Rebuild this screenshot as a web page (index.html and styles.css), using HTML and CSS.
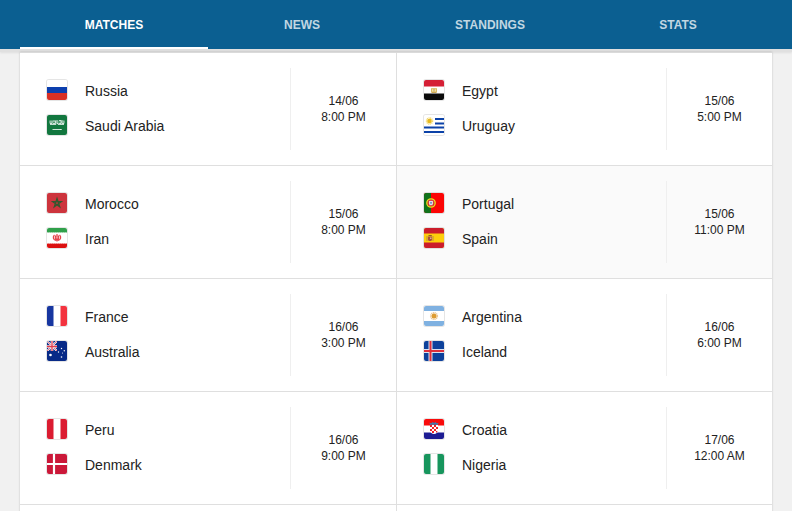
FILE: index.html
```html
<!DOCTYPE html>
<html lang="en">

<head>
  <meta charset="UTF-8">
  <meta name="viewport" content="width=device-width, initial-scale=1.0">
  <title>Matches</title>
  <link rel="stylesheet" href="styles.css">
</head>

<body>
  <header class="header">
    <nav class="tabs">
      <button type="button" class="tab active">MATCHES</button>
      <button type="button" class="tab">NEWS</button>
      <button type="button" class="tab">STANDINGS</button>
      <button type="button" class="tab">STATS</button>
    </nav>
  </header>

  <main class="matches">
    <div class="match">
      <div class="teams">
        <div class="team">
          <svg class="flag" viewBox="0 0 20 20">
            <rect width="20" height="20" fill="#fff"/>
            <rect y="7" width="20" height="7" fill="#0c3fae"/>
            <rect y="13" width="20" height="7" fill="#d93025"/>
          </svg>
          <span>Russia</span>
        </div>
        <div class="team">
          <svg class="flag" viewBox="0 0 20 20">
            <rect width="20" height="20" fill="#12773f"/>
            <rect x="3" y="5.500" width="14" height="4" fill="#fff" opacity=".25"/>
            <path d="M3 5.500v3h2v-3M6 8.500h2.500v-3M7 5v2M10 5v3.500h1.500M12 5.500h2v3h-2M15 5v3.500h2v-3M3 9.500h6M11 9.500h6" fill="none" stroke="#fff" stroke-opacity=".8" stroke-width=".9"/>
            <path d="M5.500 14.500h9M14 14v1" stroke="#fff" stroke-opacity=".8" stroke-width="1"/>
          </svg>
          <span>Saudi Arabia</span>
        </div>
      </div>
      <div class="time">14/06<br>8:00 PM</div>
    </div>

    <div class="match">
      <div class="teams">
        <div class="team">
          <svg class="flag" viewBox="0 0 20 20">
            <rect width="20" height="20" fill="#fff"/>
            <rect width="20" height="6.500" fill="#d51f35"/>
            <rect y="13.500" width="20" height="6.500" fill="#0b0b0b"/>
            <path d="M7.500 8.500l1.500.3h2l1.500-.3v3.500h-5z" fill="#f3e2ab" stroke="#dcbc62" stroke-width="1"/>
            <path d="M7.500 12.500h5M10 8.500v3" stroke="#c9a04a" stroke-width=".9"/>
          </svg>
          <span>Egypt</span>
        </div>
        <div class="team">
          <svg class="flag" viewBox="0 0 20 20">
            <rect width="20" height="20" fill="#fff"/>
            <path d="M11 4h9M11 8.500h9M0 12.500h20M0 17h20" stroke="#0c42a8" stroke-width="2"/>
            <circle cx="5.500" cy="6" r="3" fill="none" stroke="#f3d869" stroke-width="1.500" stroke-dasharray="1 .6"/>
            <circle cx="5.500" cy="6" r="2.300" fill="#e6b91e"/>
          </svg>
          <span>Uruguay</span>
        </div>
      </div>
      <div class="time">15/06<br>5:00 PM</div>
    </div>

    <div class="match">
      <div class="teams">
        <div class="team">
          <svg class="flag" viewBox="0 0 20 20">
            <rect width="20" height="20" fill="#cd343d"/>
            <path d="M10 5.500l2.700 8.300-7-5.100h8.600l-7 5.100z" fill="none" stroke="#35562e" stroke-width="1.300"/>
          </svg>
          <span>Morocco</span>
        </div>
        <div class="team">
          <svg class="flag" viewBox="0 0 20 20">
            <rect width="20" height="20" fill="#fff"/>
            <rect width="20" height="4.500" fill="#30a04b"/>
            <rect y="15.500" width="20" height="4.500" fill="#dc1010"/>
            <path d="M0 5h20M0 15h20" stroke="#fff" stroke-width=".7" stroke-dasharray="1 1" opacity=".7"/>
            <path d="M10 6v7.500M7.500 7c-2 2-1.500 4.500 1.500 5.500M12.500 7c2 2 1.500 4.500-1.500 5.500M8.800 7.500c-1 2-.8 3.500 1.200 5M11.200 7.500c1 2 .8 3.500-1.200 5" fill="none" stroke="#e3424a" stroke-width="1.200"/>
          </svg>
          <span>Iran</span>
        </div>
      </div>
      <div class="time">15/06<br>8:00 PM</div>
    </div>

    <div class="match selected">
      <div class="teams">
        <div class="team">
          <svg class="flag" viewBox="0 0 20 20">
            <rect width="20" height="20" fill="#fb0505"/>
            <rect width="7" height="20" fill="#11721b"/>
            <circle cx="7" cy="10" r="4.200" fill="#c9342a" stroke="#ece11c" stroke-width="1.300"/>
            <path d="M4.800 7.500h4.400v3.200c0 2.500-4.400 2.500-4.400 0z" fill="#fff" stroke="#d2202c" stroke-width=".7"/>
            <path d="M7 8.500v3M6 9.800h2" stroke="#4762b5" stroke-width=".8"/>
          </svg>
          <span>Portugal</span>
        </div>
        <div class="team">
          <svg class="flag" viewBox="0 0 20 20">
            <rect width="20" height="20" fill="#fdce0c"/>
            <rect width="20" height="5.500" fill="#cb1c2b"/>
            <rect y="14.500" width="20" height="5.500" fill="#cb1c2b"/>
            <path d="M3 8v5M9 8v5" stroke="#b98c45" stroke-width="1"/>
            <path d="M4 8.500h4v3c0 2-4 2-4 0z" fill="#a8523a"/>
            <path d="M4.500 7.500h3.300" stroke="#8c6324" stroke-width="1.200"/>
            <rect x="6" y="9.500" width="1.500" height="1.500" fill="#d8b0a0"/>
          </svg>
          <span>Spain</span>
        </div>
      </div>
      <div class="time">15/06<br>11:00 PM</div>
    </div>

    <div class="match">
      <div class="teams">
        <div class="team">
          <svg class="flag" viewBox="0 0 20 20">
            <rect width="20" height="20" fill="#fff"/>
            <rect width="6.500" height="20" fill="#1736a0"/>
            <rect x="13.500" width="6.500" height="20" fill="#f3333f"/>
          </svg>
          <span>France</span>
        </div>
        <div class="team">
          <svg class="flag" viewBox="0 0 20 20">
            <rect width="20" height="20" fill="#082a87"/>
            <path d="M0 0l10 10M10 0L0 10" stroke="#fff" stroke-width="1.800"/>
            <path d="M0 0l10 10M10 0L0 10" stroke="#e23a4a" stroke-width=".7"/>
            <path d="M5 0v10M0 5.500h10" stroke="#fff" stroke-width="2.600"/>
            <path d="M5 0v10M0 5.500h10" stroke="#e23a4a" stroke-width="1.300"/>
            <path d="M0 10h10v4H0zM10 0h2v11h-2z" fill="#082a87"/>
            <g fill="#fff">
              <circle cx="3.500" cy="14" r="1.300"/>
              <circle cx="14.500" cy="7.500" r=".7"/>
              <circle cx="11.500" cy="11" r=".7"/>
              <circle cx="17.300" cy="9.800" r=".7"/>
              <circle cx="15.500" cy="12" r=".5"/>
              <circle cx="14.500" cy="16" r=".8"/>
            </g>
          </svg>
          <span>Australia</span>
        </div>
      </div>
      <div class="time">16/06<br>3:00 PM</div>
    </div>

    <div class="match">
      <div class="teams">
        <div class="team">
          <svg class="flag" viewBox="0 0 20 20">
            <rect width="20" height="20" fill="#fff"/>
            <rect width="20" height="5" fill="#7fb1e1"/>
            <rect y="15" width="20" height="5" fill="#7fb1e1"/>
            <circle cx="10" cy="10" r="3.400" fill="none" stroke="#ecc794" stroke-width="1.400" stroke-dasharray="1.200 .6"/>
            <circle cx="10" cy="10" r="2.500" fill="#dd9c32"/>
          </svg>
          <span>Argentina</span>
        </div>
        <div class="team">
          <svg class="flag" viewBox="0 0 20 20">
            <rect width="20" height="20" fill="#0d419b"/>
            <path d="M6.500 0v20M0 10h20" stroke="#fff" stroke-opacity=".85" stroke-width="4"/>
            <path d="M6.500 0v20M0 10h20" stroke="#de2f3c" stroke-width="2"/>
          </svg>
          <span>Iceland</span>
        </div>
      </div>
      <div class="time">16/06<br>6:00 PM</div>
    </div>

    <div class="match">
      <div class="teams">
        <div class="team">
          <svg class="flag" viewBox="0 0 20 20">
            <rect width="20" height="20" fill="#fff"/>
            <rect width="6.500" height="20" fill="#db1c31"/>
            <rect x="13.500" width="6.500" height="20" fill="#db1c31"/>
          </svg>
          <span>Peru</span>
        </div>
        <div class="team">
          <svg class="flag" viewBox="0 0 20 20">
            <rect width="20" height="20" fill="#cb1839"/>
            <path d="M7 0v20M0 10h20" stroke="#fff" stroke-width="2.200"/>
          </svg>
          <span>Denmark</span>
        </div>
      </div>
      <div class="time">16/06<br>9:00 PM</div>
    </div>

    <div class="match">
      <div class="teams">
        <div class="team">
          <svg class="flag" viewBox="0 0 20 20">
            <rect width="20" height="20" fill="#fff"/>
            <rect width="20" height="6.500" fill="#f90b0b"/>
            <rect y="13.500" width="20" height="6.500" fill="#1d1c93"/>
            <path d="M6 6h8v5.500c0 4.500-8 4.500-8 0z" fill="#fff"/>
            <path d="M6 6h2v2H6zM10 6h2v2h-2zM8 8h2v2H8zM12 8h2v2h-2zM6 10h2v2H6zM10 10h2v2h-2zM8 12h2v2H8zM12 12h1.500l-.5 1.500h-1z" fill="#ee2026"/>
            <path d="M6 5.800l-.5-2 1.800.5L8.500 3l1.500 1 1.500-1 1.200 1.300 1.800-.5-.5 2z" fill="#4279ad"/>
          </svg>
          <span>Croatia</span>
        </div>
        <div class="team">
          <svg class="flag" viewBox="0 0 20 20">
            <rect width="20" height="20" fill="#fff"/>
            <rect width="6.500" height="20" fill="#17955d"/>
            <rect x="13.500" width="6.500" height="20" fill="#17955d"/>
          </svg>
          <span>Nigeria</span>
        </div>
      </div>
      <div class="time">17/06<br>12:00 AM</div>
    </div>

    <div class="match"></div>
    <div class="match"></div>
  </main>
</body>

</html>
```
FILE: styles.css
```css
* {
  margin: 0;
  padding: 0;
  box-sizing: border-box;
}

body {
  height: 100vh;
  overflow: hidden;
  font-family: "Liberation Sans", Arial, sans-serif;
  background-color: #f1f1f1;
  color: #222;
}

.header {
  padding: 0 20px;
  background: #0b5f91;
  background-clip: padding-box;
  border-bottom: 3px solid #e0e0e0;
  box-shadow: 0 1px 2px rgba(0, 0, 0, 0.08);
}

.tabs {
  display: grid;
  grid-template-columns: repeat(4, 1fr);
}

.tab {
  height: 49px;
  padding-top: 2px;
  border: none;
  border-bottom: 2px solid transparent;
  background: none;
  color: rgba(255, 255, 255, 0.75);
  font-family: inherit;
  font-size: 12px;
  font-weight: bold;
  cursor: pointer;
}

.tab.active {
  color: #fff;
  border-bottom-color: #fff;
}

/* two matches per row */
.matches {
  display: grid;
  grid-template-columns: 1fr 1fr;
  margin: 0 20px;
  background: #fff;
  border-top: 1px solid #dadada;
  box-shadow: 0 0 2px rgba(0, 0, 0, 0.2);
}

.match {
  display: flex;
  min-height: 113px;
  padding: 15px 0;
  border-bottom: 1px solid #dfdfdf;
}

.match:nth-child(even) {
  border-left: 1px solid #dfdfdf;
}

.match.selected {
  background: #fafafa;
}

.teams {
  flex: 1;
  display: flex;
  flex-direction: column;
  gap: 15px;
  padding: 12px 27px;
}

.team {
  display: flex;
  align-items: center;
  gap: 18px;
  height: 20px;
  font-size: 14px;
  line-height: 20px;
}

.team span {
  padding-top: 2px;
}

.flag {
  width: 20px;
  height: 20px;
  border-radius: 2px;
  box-shadow: 0 0 0 1px rgba(0, 0, 0, 0.1);
}

.time {
  width: 106px;
  display: flex;
  flex-direction: column;
  justify-content: center;
  border-left: 1px solid #efefef;
  font-size: 12px;
  line-height: 16px;
  text-align: center;
}
```
